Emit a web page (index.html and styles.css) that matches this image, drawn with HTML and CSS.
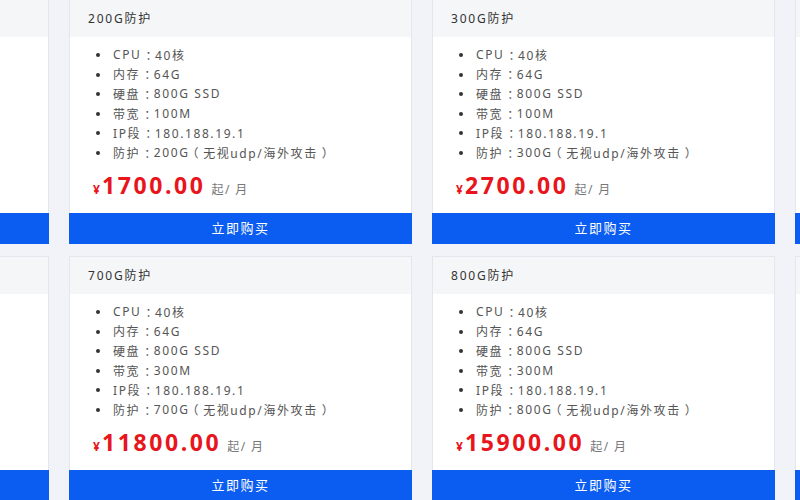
FILE: index.html
```html
<!DOCTYPE html>
<html lang="zh-CN">
<head>
<meta charset="utf-8">
<title>防护套餐</title>
<link rel="stylesheet" href="styles.css">
</head>
<body>
<div class="grid">
  <div class="card">
    <div class="card-head">100G防护</div>
    <ul class="specs">
      <li>CPU<span class="co">：</span>40核</li><li>内存<span class="co">：</span>64G</li><li>硬盘<span class="co">：</span>800G SSD</li><li>带宽<span class="co">：</span>100M</li><li>IP段<span class="co">：</span>180.188.19.1</li><li>防护<span class="co">：</span>100G<span class="lp">（</span>无视udp/海外攻击<span class="rp">）</span></li>
    </ul>
    <div class="price"><span class="cur">¥</span><span class="num">1200.00</span><span class="unit">起/ 月</span></div>
    <a class="buy">立即购买</a>
  </div>
  <div class="card">
    <div class="card-head">200G防护</div>
    <ul class="specs">
      <li>CPU<span class="co">：</span>40核</li><li>内存<span class="co">：</span>64G</li><li>硬盘<span class="co">：</span>800G SSD</li><li>带宽<span class="co">：</span>100M</li><li>IP段<span class="co">：</span>180.188.19.1</li><li>防护<span class="co">：</span>200G<span class="lp">（</span>无视udp/海外攻击<span class="rp">）</span></li>
    </ul>
    <div class="price"><span class="cur">¥</span><span class="num">1700.00</span><span class="unit">起/ 月</span></div>
    <a class="buy">立即购买</a>
  </div>
  <div class="card">
    <div class="card-head">300G防护</div>
    <ul class="specs">
      <li>CPU<span class="co">：</span>40核</li><li>内存<span class="co">：</span>64G</li><li>硬盘<span class="co">：</span>800G SSD</li><li>带宽<span class="co">：</span>100M</li><li>IP段<span class="co">：</span>180.188.19.1</li><li>防护<span class="co">：</span>300G<span class="lp">（</span>无视udp/海外攻击<span class="rp">）</span></li>
    </ul>
    <div class="price"><span class="cur">¥</span><span class="num">2700.00</span><span class="unit">起/ 月</span></div>
    <a class="buy">立即购买</a>
  </div>
  <div class="card">
    <div class="card-head">500G防护</div>
    <ul class="specs">
      <li>CPU<span class="co">：</span>40核</li><li>内存<span class="co">：</span>64G</li><li>硬盘<span class="co">：</span>800G SSD</li><li>带宽<span class="co">：</span>100M</li><li>IP段<span class="co">：</span>180.188.19.1</li><li>防护<span class="co">：</span>500G<span class="lp">（</span>无视udp/海外攻击<span class="rp">）</span></li>
    </ul>
    <div class="price"><span class="cur">¥</span><span class="num">5800.00</span><span class="unit">起/ 月</span></div>
    <a class="buy">立即购买</a>
  </div>
  <div class="card">
    <div class="card-head">600G防护</div>
    <ul class="specs">
      <li>CPU<span class="co">：</span>40核</li><li>内存<span class="co">：</span>64G</li><li>硬盘<span class="co">：</span>800G SSD</li><li>带宽<span class="co">：</span>300M</li><li>IP段<span class="co">：</span>180.188.19.1</li><li>防护<span class="co">：</span>600G<span class="lp">（</span>无视udp/海外攻击<span class="rp">）</span></li>
    </ul>
    <div class="price"><span class="cur">¥</span><span class="num">9800.00</span><span class="unit">起/ 月</span></div>
    <a class="buy">立即购买</a>
  </div>
  <div class="card">
    <div class="card-head">700G防护</div>
    <ul class="specs">
      <li>CPU<span class="co">：</span>40核</li><li>内存<span class="co">：</span>64G</li><li>硬盘<span class="co">：</span>800G SSD</li><li>带宽<span class="co">：</span>300M</li><li>IP段<span class="co">：</span>180.188.19.1</li><li>防护<span class="co">：</span>700G<span class="lp">（</span>无视udp/海外攻击<span class="rp">）</span></li>
    </ul>
    <div class="price"><span class="cur">¥</span><span class="num">11800.00</span><span class="unit">起/ 月</span></div>
    <a class="buy">立即购买</a>
  </div>
  <div class="card">
    <div class="card-head">800G防护</div>
    <ul class="specs">
      <li>CPU<span class="co">：</span>40核</li><li>内存<span class="co">：</span>64G</li><li>硬盘<span class="co">：</span>800G SSD</li><li>带宽<span class="co">：</span>300M</li><li>IP段<span class="co">：</span>180.188.19.1</li><li>防护<span class="co">：</span>800G<span class="lp">（</span>无视udp/海外攻击<span class="rp">）</span></li>
    </ul>
    <div class="price"><span class="cur">¥</span><span class="num">15900.00</span><span class="unit">起/ 月</span></div>
    <a class="buy">立即购买</a>
  </div>
  <div class="card">
    <div class="card-head">1000G防护</div>
    <ul class="specs">
      <li>CPU<span class="co">：</span>40核</li><li>内存<span class="co">：</span>64G</li><li>硬盘<span class="co">：</span>800G SSD</li><li>带宽<span class="co">：</span>300M</li><li>IP段<span class="co">：</span>180.188.19.1</li><li>防护<span class="co">：</span>1000G<span class="lp">（</span>无视udp/海外攻击<span class="rp">）</span></li>
    </ul>
    <div class="price"><span class="cur">¥</span><span class="num">19900.00</span><span class="unit">起/ 月</span></div>
    <a class="buy">立即购买</a>
  </div>
</div>
</body>
</html>
```
FILE: styles.css
```css
html, body {
  margin: 0;
  padding: 0;
  background: #f1f3f8;
  overflow: hidden;
}
body {
  font-family: "Noto Sans", "Noto Sans CJK SC", sans-serif;
  width: 800px;
  height: 500px;
}
.grid {
  display: grid;
  grid-template-columns: repeat(4, 343px);
  column-gap: 20px;
  row-gap: 12px;
  margin-left: -294px;
  margin-top: -1px;
  width: 1500px;
}
.card {
  background: #fff;
  border: 1px solid #e3e6ec;
  display: flex;
  flex-direction: column;
  height: 245px;
  box-sizing: border-box;
}
.card-head {
  height: 37px;
  flex: none;
  background: #f5f6f8;
  color: #333;
  font-size: 12px;
  letter-spacing: 1.8px;
  line-height: 37px;
  padding-left: 18px;
}
.specs {
  list-style: none;
  margin: 0;
  padding: 8px 0 0 0;
}
.specs li {
  display: flex;
  align-items: center;
  height: 19.6px;
  font-size: 12px;
  letter-spacing: 1.6px;
  color: #555;
  padding-left: 43px;
  position: relative;
  white-space: pre;
}
.specs li::before {
  content: "";
  position: absolute;
  left: 26px;
  top: 8px;
  width: 4px;
  height: 4px;
  border-radius: 50%;
  background: #333;
}
.co {
  font-feature-settings: "halt";
  margin-left: 4px;
  margin-right: 2px;
}
.lp {
  font-feature-settings: "halt";
  margin-left: 3px;
  margin-right: 3px;
}
.rp {
  font-feature-settings: "halt";
  margin-left: 4px;
}
.price {
  display: flex;
  align-items: baseline;
  padding-left: 23px;
  margin-top: 6px;
  height: 34px;
}
.cur {
  color: #e8151c;
  font-size: 12px;
  font-weight: bold;
  margin-right: 2px;
}
.num {
  color: #e8151c;
  font-size: 23px;
  font-weight: bold;
  letter-spacing: 2.6px;
  font-family: "Open Sans", "Noto Sans", sans-serif;
}
.unit {
  color: #777;
  font-size: 12px;
  letter-spacing: 1.4px;
  margin-left: 6px;
}
.buy {
  margin-top: auto;
  height: 31px;
  background: #0b5cf0;
  color: #fff;
  font-size: 13px;
  letter-spacing: 1.5px;
  line-height: 31px;
  text-align: center;
  margin-left: -1px;
  margin-right: -1px;
  margin-bottom: -1px;
}
```
